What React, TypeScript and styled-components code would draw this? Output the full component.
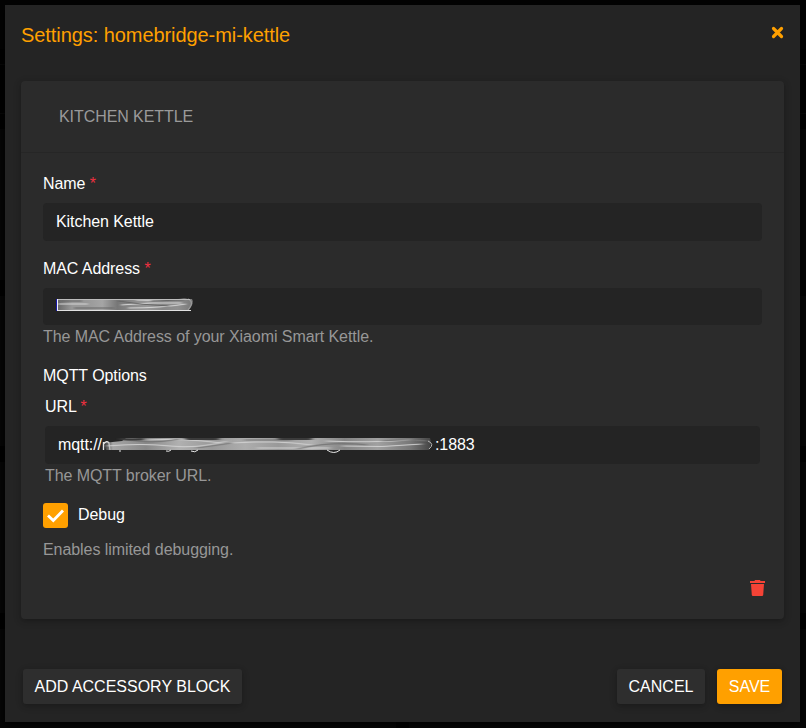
import React from "react";
import styled, { createGlobalStyle } from "styled-components";

const GlobalStyle = createGlobalStyle`
  * { box-sizing: border-box; }
  body { margin: 0; background: #060606; }
`;

const Backdrop = styled.div`
  height: 728px;
  padding: 5px 6px 6px 5px;
  overflow: hidden;
  font: 16px/24px "Liberation Sans", Arial, sans-serif;
  letter-spacing: -0.07px;
  color: #fff;
  background:
    linear-gradient(#000, #000) 396px 722px / 13px 6px no-repeat,
    linear-gradient(#030303 0 49px, #000 49px 64px, #080808 64px 65px, #000 65px 113px,
      #080808 113px 114px, #000 114px 129px, #060606 129px 280px, #000 280px 296px,
      #060606 296px 446px, #000 446px 462px, #060606 462px 613px, #000 613px 629px, #060606 629px);
`;

const Modal = styled.div`
  display: flex;
  flex-direction: column;
  height: 717px;
  background: #242424;
  box-shadow: 0 2px 8px #000;
`;

const ModalHeader = styled.header`
  display: flex;
  justify-content: space-between;
  height: 76px;
  padding: 15px 16px 0 16px;
  color: #ffa000;
`;

const Title = styled.h1`
  margin: 0;
  font-size: 20px;
  font-weight: 400;
  line-height: 30px;
`;

const CloseButton = styled.button`
  display: flex;
  width: 13px;
  height: 13px;
  margin-top: 6px;
  padding: 0;
  border: 0;
  background: none;
  color: inherit;
`;

const Card = styled.section`
  height: 538px;
  margin: 0 16px;
  border-radius: 4px;
  background: #2b2b2b;
  box-shadow: 0 2px 5px rgba(0, 0, 0, 0.18), 0 2px 10px rgba(0, 0, 0, 0.12);
`;

const CardHeader = styled.div`
  height: 72px;
  padding: 24px 38px 0;
  border-bottom: 1px solid #262626;
  color: #9a9a9a;
`;

const CardBody = styled.div`
  display: flex;
  flex-direction: column;
  padding: 19px 22px 0;
`;

const Field = styled.div<{ $inset?: boolean; $gap: number }>`
  display: flex;
  flex-direction: column;
  margin: 0 ${(p) => (p.$inset ? 2 : 0)}px ${(p) => p.$gap}px;
`;

const Label = styled.label`
  height: 31px;
`;

const Required = styled.span`
  color: #f03040;
`;

const Input = styled.div<{ $height?: number }>`
  display: flex;
  align-items: center;
  height: ${(p) => p.$height ?? 38}px;
  padding: 0 13px;
  border-radius: 4px;
  background: #242424;
`;

const Help = styled.div`
  color: #979797;
`;

const SectionLabel = styled.div`
  height: 31px;
`;

const CheckRow = styled.label`
  display: flex;
  align-items: center;
  gap: 10px;
  height: 25px;
  margin-bottom: 10px;
`;

const CheckBox = styled.span`
  display: flex;
  width: 25px;
  height: 25px;
  border-radius: 3px;
  background: #ffa000;
`;

const CheckText = styled.span`
  height: 25px;
`;

const DeleteRow = styled.div`
  display: flex;
  justify-content: flex-end;
  margin: 18px -4px 0 0;
`;

const Footer = styled.footer`
  display: flex;
  gap: 12px;
  margin: 50px 18px 0;
`;

const Button = styled.button<{ $primary?: boolean; $width: number }>`
  width: ${(p) => p.$width}px;
  height: 35px;
  padding: 0;
  border: 0;
  border-radius: 3px;
  background: ${(p) => (p.$primary ? "#ffa000" : "#2e2e2e")};
  color: #fff;
  font: inherit;
  letter-spacing: 0;
  white-space: nowrap;
  box-shadow: 0 2px 5px rgba(0, 0, 0, 0.16), 0 2px 8px rgba(0, 0, 0, 0.12);
`;

const Spacer = styled.span`
  flex: 1;
`;

const SmudgeSvg = styled.svg<{ $lift?: number }>`
  display: block;
  flex: none;
  margin-bottom: ${(p) => p.$lift ?? 0}px;
  overflow: visible;
`;

const tones = ["#a5a5a5", "#888", "#b0b0b0", "#999", "#adadad", "#999", "#b0b0b0", "#858585", "#a0a0a0", "#777"];

const MacSmudge = () => (
  <SmudgeSvg width="138" height="14" $lift={3}>
    <defs>
      <linearGradient id="mac">
        {["#666", "#999", "#999", "#a5a5a5", "#777", "#8b8b8b", "#999", "#888", "#909090", "#777"].map((c, i) => (
          <stop key={i} offset={i / 9} stopColor={c} />
        ))}
      </linearGradient>
      <filter id="soft" filterUnits="userSpaceOnUse" x="0" y="0" width="138" height="14">
        <feGaussianBlur stdDeviation="1.6 .6" />
      </filter>
    </defs>
    <path d="M1 1H136Q139 5 132 12H1Z" fill="url(#mac)" />
    <g fill="none" filter="url(#soft)">
      <path d="M2 6H32M65 7Q95 4 126 5M72 10Q105 10 130 6M80 2Q108 3 130 1" stroke="#d5d5d5" />
      <path d="M4 3H26M18 10H58M62 3Q86 7 113 8M95 3L128 2" stroke="#666" />
    </g>
    <path d="M132 1Q139 4 132 12" fill="none" stroke="#999" strokeWidth="1.3" />
    <path d="M1 1.5H134" stroke="#bcbcbc" />
    <path d="M1 12.5H135" stroke="#e2e2e2" />
    <path d="M1.5 1V13" stroke="#eef" />
    <path d="M.5 1V13" stroke="#1717a5" />
  </SmudgeSvg>
);

const UrlSmudge = () => (
  <SmudgeSvg width="333" height="18">
    <defs>
      <linearGradient id="url">
        <stop offset="0" stopColor="#aaa" stopOpacity="0" />
        {tones.map((c, i) => (
          <stop key={i} offset={0.03 + i * 0.101} stopColor={c} />
        ))}
        <stop offset="1" stopColor="#444" />
      </linearGradient>
      <filter id="blur" filterUnits="userSpaceOnUse" x="0" y="0" width="333" height="17">
        <feGaussianBlur stdDeviation="2.6 .65" />
      </filter>
    </defs>
    <path d="M1.5 14V6M1.5 8Q5 4 7 7L8 14" fill="none" stroke="#e5e5e5" strokeWidth="1.4" />
    <path d="M1 7L20 5L24 2H328Q330 7 327 14H4Z" fill="url(#url)" />
    <g filter="url(#blur)" fill="none">
      <path d="M5 10Q40 7 68 10T125 5M45 4Q80 2 120 7M130 7Q175 4 210 9M155 12H228M224 5Q268 7 308 4M240 10Q280 12 320 8" stroke="#d0d0d0" />
      <path d="M24 4Q52 8 78 3M95 12L130 7M142 4H190M195 13Q230 5 265 9M280 5Q300 3 325 5" stroke="#777" strokeWidth="1.2" />
      <path d="M18 3Q30 4 42 3M83 3H117M176 3H210" stroke="#3a3a3a" strokeWidth="2" />
    </g>
    <g fill="none" stroke="#e8e8e8">
      <path d="M18 14V16M64 15Q67 16 69 14M89 15Q93 17 96 14M225 14Q232 19 238 14" />
      <path d="M326 5Q333 8 327 13" stroke="#bbb" />
    </g>
  </SmudgeSvg>
);

const Star = () => <Required>*</Required>;

export default function App() {
  return (
    <>
      <GlobalStyle />
      <Backdrop>
        <Modal>
          <ModalHeader>
            <Title>Settings: homebridge-mi-kettle</Title>
            <CloseButton aria-label="Close">
              <svg width="13" height="13" viewBox="0 0 13 13">
                <path d="M2.5 2.5L10.5 10.5M10.5 2.5L2.5 10.5" stroke="currentColor" strokeWidth="3.2" strokeLinecap="round" />
              </svg>
            </CloseButton>
          </ModalHeader>
          <Card>
            <CardHeader>KITCHEN KETTLE</CardHeader>
            <CardBody>
              <Field $gap={16}>
                <Label>Name <Star /></Label>
                <Input>Kitchen Kettle</Input>
              </Field>
              <Field $gap={15}>
                <Label>MAC Address <Star /></Label>
                <Input $height={37}><MacSmudge /></Input>
                <Help>The MAC Address of your Xiaomi Smart Kettle.</Help>
              </Field>
              <SectionLabel>MQTT Options</SectionLabel>
              <Field $inset $gap={15}>
                <Label>URL <Star /></Label>
                <Input>mqtt://<UrlSmudge />:1883</Input>
                <Help>The MQTT broker URL.</Help>
              </Field>
              <CheckRow>
                <CheckBox>
                  <svg width="25" height="25" viewBox="0 0 25 25">
                    <path d="M5 12.5L10.3 17.5L20 7.5" fill="none" stroke="#fff" strokeWidth="2.8" />
                  </svg>
                </CheckBox>
                <CheckText>Debug</CheckText>
              </CheckRow>
              <Help>Enables limited debugging.</Help>
              <DeleteRow>
                <svg width="17" height="17" viewBox="0 0 17 17" fill="#f44336">
                  <path d="M1 1H5.5L6 0H11L11.5 1H16V3H1ZM2 4H15L14.2 15Q14.1 16 13 16H4Q2.9 16 2.8 15Z" />
                </svg>
              </DeleteRow>
            </CardBody>
          </Card>
          <Footer>
            <Button $width={219}>ADD ACCESSORY BLOCK</Button>
            <Spacer />
            <Button $width={88}>CANCEL</Button>
            <Button $width={65} $primary>SAVE</Button>
          </Footer>
        </Modal>
      </Backdrop>
    </>
  );
}
